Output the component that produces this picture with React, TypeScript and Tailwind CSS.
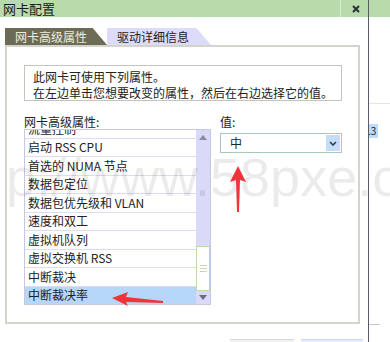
const rows = [
  "流量控制",
  "启动 RSS CPU",
  "首选的 NUMA 节点",
  "数据包定位",
  "数据包优先级和 VLAN",
  "速度和双工",
  "虚拟机队列",
  "虚拟交换机 RSS",
  "中断裁决",
  "中断裁决率",
];

const font = "font-['Noto_Sans_CJK_SC','Liberation_Sans',sans-serif]";

const PropertyList = () => (
  <div className="flex h-[176px] w-[187px] border border-[#c8c8dc] bg-white">
    <div className="flex-1 overflow-hidden">
      <div className="-mt-[10px]">
        {rows.map((r, i) => (
          <div
            key={r}
            className={`flex h-[18.5px] items-center border-b border-[#dcdcf6] pl-[3px] text-[12px] leading-none text-[#222] ${
              i === rows.length - 1 ? "bg-[#b6d6fa]" : ""
            }`}
          >
            {r}
          </div>
        ))}
      </div>
    </div>
    <div className="flex w-[14px] flex-col bg-[#dadaf8]">
      <div className="flex h-[14px] items-center justify-center">
        <svg width="8" height="5" viewBox="0 0 8 5">
          <path d="M0 5 L4 0 L8 5 Z" fill="#8a8aa0" />
        </svg>
      </div>
      <div className="h-[102px]" />
      <div className="flex h-[45px] items-center justify-center border border-[#b9dcaa] bg-white">
        <div className="flex flex-col gap-[2px]">
          <div className="h-px w-[7px] bg-[#d6d2a8]" />
          <div className="h-px w-[7px] bg-[#d6d2a8]" />
          <div className="h-px w-[7px] bg-[#d6d2a8]" />
        </div>
      </div>
      <div className="flex flex-1 items-center justify-center">
        <svg width="8" height="5" viewBox="0 0 8 5">
          <path d="M0 0 L8 0 L4 5 Z" fill="#6a6a80" />
        </svg>
      </div>
    </div>
  </div>
);

export default function App() {
  return (
    <div className={`relative h-[342px] w-[390px] overflow-hidden bg-white ${font} text-[#222]`}>
      <div className="flex h-[17px] items-center bg-[#b7dbaa]">
        <span className="pl-[3px] text-[13px] leading-none text-[#1a1a1a]">网卡配置</span>
        <div className="ml-auto mr-[30px] flex h-full items-center">
          <div className="h-full w-px bg-[#d8e8d0]" />
          <svg className="ml-[11px]" width="8" height="8" viewBox="0 0 8 8">
            <path d="M1 1 L7 7 M7 1 L1 7" stroke="#283040" strokeWidth="2" />
          </svg>
        </div>
      </div>

      <div className="flex">
        <div className="w-[368px] px-[5px] pt-[11px]">
          <div className="flex h-[17px] text-[12px] leading-none">
            <div className="flex w-[102px] items-center bg-[#6c6c56] pl-[10px] text-[#ececdc] [clip-path:polygon(0_0,86%_0,100%_100%,0_100%)]">
              网卡高级属性
            </div>
            <div className="flex w-[104px] items-center bg-[#dcdcfa] pl-[10px] text-[#222] [clip-path:polygon(0_0,86%_0,100%_100%,0_100%)]">
              驱动详细信息
            </div>
          </div>

          <div className="h-[279px] w-[355px] border-2 border-[#d4d4cc] px-[17px] pt-[18px]">
            <div className="h-[36px] w-[318px] border border-[#c4c4bc] pl-[8px] pt-[3px] text-[12px] leading-[16px]">
              <div>此网卡可使用下列属性。</div>
              <div>在左边单击您想要改变的属性，然后在右边选择它的值。</div>
            </div>

            <div className="mt-[14px] flex gap-[9px]">
              <div className="flex flex-col">
                <div className="h-[14px] text-[12px] leading-[14px]">网卡高级属性:</div>
                <PropertyList />
              </div>
              <div className="flex flex-col">
                <div className="h-[18px] text-[12px] leading-[14px]">值:</div>
                <div className="flex h-[20px] w-[122px] items-center border border-[#a9c9b6] bg-white p-px">
                  <span className="flex-1 pl-[8px] text-[12px] leading-none">中</span>
                  <div className="flex h-full w-[14px] items-center justify-center bg-[#c2def9]">
                    <svg width="8" height="5" viewBox="0 0 8 5">
                      <path d="M1 1 L4 4 L7 1" stroke="#303848" strokeWidth="1.5" fill="none" />
                    </svg>
                  </div>
                </div>
              </div>
            </div>
          </div>

          <div className="mt-[15px] flex gap-[7px] pl-[225px]">
            <div className="h-[4px] w-[65px] border-t border-[#d8d8d8] bg-[#f0f0f0]" />
            <div className="h-[4px] w-[63px] border-t border-[#c8d8f0] bg-[#e4eefa]" />
          </div>
        </div>

        <div className="flex-1">
          <div className="mt-[86px] h-px bg-[#e4e4f4]" />
          <div className="mt-[20px] flex h-[14px] w-[10px] items-center bg-[#bcdcfa] text-[10px] leading-none">.3</div>
          <div className="mt-[186px] h-px w-[12px] bg-[#c8c8c8]" />
        </div>
      </div>

      <div className="absolute left-[368px] top-0 h-full w-px bg-[#5a5a66]" />

      <div className="pointer-events-none absolute left-[6px] top-[150px] whitespace-nowrap font-['Liberation_Sans',sans-serif] text-[54px] leading-none text-black/[0.08]">
        p://www.58pxe.com
      </div>

      <svg className="absolute left-[229px] top-[166px]" width="18" height="48" viewBox="0 0 18 48">
        <path d="M9 0 L17 16 L11 14 L10 46 L8 46 L7 14 L1 16 Z" fill="#f0353a" />
      </svg>
      <svg className="absolute left-[110px] top-[291px]" width="54" height="16" viewBox="0 0 54 16">
        <path d="M2 7 L18 1 L16 6 L53 10 L53 12 L16 11 L18 15 Z" fill="#f0353a" />
      </svg>
    </div>
  );
}
